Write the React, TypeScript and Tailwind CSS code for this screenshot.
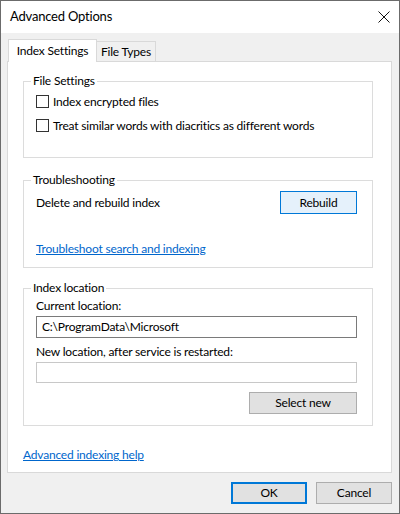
const font = { fontFamily: 'Lato, "Noto Sans", "Liberation Sans", sans-serif' }

function GroupBox({ title, className, children }: { title: string; className: string; children: React.ReactNode }) {
  return (
    <div className={`relative ml-[15px] w-[350px] border border-[#dcdcdc] pl-[12px] pr-[15px] ${className}`}>
      <span className="absolute left-[7px] top-[-9px] bg-white px-[2px] leading-[16px]">{title}</span>
      {children}
    </div>
  )
}

function Check({ label }: { label: string }) {
  return (
    <label className="flex h-[13px] items-center gap-[4px]">
      <span className="h-[13px] w-[13px] shrink-0 border border-[#333] bg-white" />
      <span className="leading-[16px]">{label}</span>
    </label>
  )
}

export default function App() {
  return (
    <div style={font} className="flex h-[514px] w-[400px] flex-col border border-[#6b6b6b] bg-[#f0f0f0] text-[12px] tracking-[-0.2px] text-black">
      {/* title bar */}
      <div className="flex h-[32px] shrink-0 items-center justify-between bg-white pl-[9px] pr-[9px]">
        <span className="text-[13px]">Advanced Options</span>
        <svg width="12" height="12" viewBox="0 0 12 12" className="text-[#111]">
          <path d="M0.5 0.5 L11.5 11.5 M11.5 0.5 L0.5 11.5" stroke="currentColor" strokeWidth="1" fill="none" />
        </svg>
      </div>

      {/* tabs */}
      <div className="mt-[6px] flex items-end pl-[7px]">
        <div className="relative z-10 -mb-px flex h-[23px] w-[89px] items-center justify-center border border-b-0 border-[#d9d9d9] bg-white">
          Index Settings
        </div>
        <div className="flex h-[20px] w-[59px] items-center justify-center border border-b-0 border-l-0 border-[#d9d9d9] bg-[#f0f0f0]">
          File Types
        </div>
      </div>

      <div className="ml-[6px] mr-[7px] flex h-[412px] flex-col border border-[#d9d9d9] bg-white">
        <GroupBox title="File Settings" className="mt-[19px] h-[77px] pt-[13px]">
          <div className="flex flex-col gap-[11px]">
            <Check label="Index encrypted files" />
            <Check label="Treat similar words with diacritics as different words" />
          </div>
        </GroupBox>

        <GroupBox title="Troubleshooting" className="mt-[22px] h-[88px] pt-[10px]">
          <div className="flex items-center justify-between">
            <span>Delete and rebuild index</span>
            <button className="h-[23px] w-[77px] border border-[#0078d7] bg-[#e5f1fb]">Rebuild</button>
          </div>
          <a className="mt-[27px] block leading-[16px] text-[#0066cc] underline">Troubleshoot search and indexing</a>
        </GroupBox>

        <GroupBox title="Index location" className="mt-[20px] h-[138px] pt-[9px]">
          <div className="leading-[16px]">Current location:</div>
          <div className="mt-[2px] flex h-[22px] items-center border border-[#7a7a7a] px-[5px]">
            C:\ProgramData\Microsoft
          </div>
          <div className="mt-[6px] leading-[16px]">New location, after service is restarted:</div>
          <div className="mt-[2px] h-[21px] border border-[#c8c8c8]" />
          <div className="mt-[9px] flex justify-end">
            <button className="h-[22px] w-[108px] border border-[#adadad] bg-[#e1e1e1]">Select new</button>
          </div>
        </GroupBox>

        <a className="ml-[15px] mt-[21px] self-start leading-[16px] text-[#0066cc] underline">Advanced indexing help</a>
      </div>

      <div className="mt-[9px] flex justify-end gap-[9px] pr-[7px]">
        <button className="h-[22px] w-[76px] border-2 border-[#0078d7] bg-[#e1e1e1]">OK</button>
        <button className="h-[22px] w-[76px] border border-[#adadad] bg-[#e1e1e1]">Cancel</button>
      </div>
    </div>
  )
}
